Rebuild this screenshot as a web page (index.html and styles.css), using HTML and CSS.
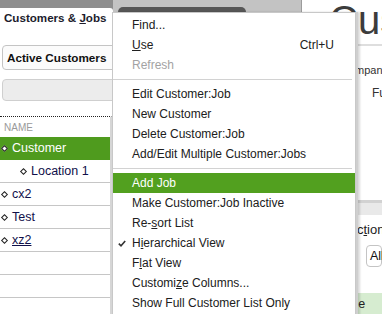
FILE: index.html
```html
<!DOCTYPE html>
<html>
<head>
<meta charset="utf-8">
<link rel="stylesheet" href="styles.css">
</head>
<body>
<div class="app">
  <section class="left">
    <div class="title">Customers &amp; <u>J</u>obs</div>
    <div class="select">Active Customers</div>
    <div class="search"></div>
    <div class="list">
      <div class="head">NAME</div>
      <div class="row sel"><span class="dia"></span>Customer</div>
      <div class="row sub"><span class="dia"></span>Location 1</div>
      <div class="row"><span class="dia"></span>cx2</div>
      <div class="row"><span class="dia"></span>Test</div>
      <div class="row"><span class="dia"></span><span class="link">xz2</span></div>
      <div class="row"></div>
      <div class="row"></div>
      <div class="row"></div>
    </div>
  </section>
  <section class="mid">
    <div class="tab"></div>
  </section>
  <section class="right">
    <div class="heading">Customer</div>
    <div class="field f1">Company Name</div>
    <div class="field f2">Full Name</div>
    <div class="bar"></div>
    <div class="trans">Transac<u>t</u>ions</div>
    <div class="all">All</div>
    <div class="green">Type</div>
  </section>

  <nav class="menu">
    <div class="item"><span>Find...</span></div>
    <div class="item"><span><u>U</u>se</span><span>Ctrl+U</span></div>
    <div class="item dis"><span>Refresh</span></div>
    <div class="sep"></div>
    <div class="item"><span>Edit Customer:Job</span></div>
    <div class="item"><span>New Customer</span></div>
    <div class="item"><span>Delete Customer:Job</span></div>
    <div class="item"><span>Add/Edit Multiple Customer:Jobs</span></div>
    <div class="sep"></div>
    <div class="item hi"><span>Add Job</span></div>
    <div class="item"><span>Make Customer:Job Inactive</span></div>
    <div class="item"><span>Re-<u>s</u>ort List</span></div>
    <div class="item"><svg class="check" width="8" height="7" viewBox="0 0 8 7"><polyline points="0.8,3.6 3,5.8 7.2,1" fill="none" stroke="#333" stroke-width="1.6"/></svg><span>H<u>i</u>erarchical View</span></div>
    <div class="item"><span>F<u>l</u>at View</span></div>
    <div class="item"><span>Customi<u>z</u>e Columns...</span></div>
    <div class="item"><span>Show Full Customer List Only</span></div>
  </nav>
</div>
</body>
</html>
```

FILE: styles.css
```css
html, body {
  margin: 0;
  padding: 0;
}
body {
  width: 382px;
  height: 314px;
  overflow: hidden;
  font-family: "Liberation Sans", Arial, sans-serif;
}
.app {
  position: relative;
  display: grid;
  grid-template-columns: 113px 188px 81px;
  height: 314px;
  background: #8e8e8e;
}
.left {
  margin-top: 8px;
  background: #fff;
  border-top-right-radius: 3px;
  display: flex;
  flex-direction: column;
  overflow: hidden;
}
.left > * {
  flex: none;
}
.title {
  height: 20px;
  line-height: 20px;
  padding-left: 4px;
  font-size: 11.6px;
  font-weight: bold;
  color: #1c1c2c;
  white-space: nowrap;
}
.select {
  margin: 17px 0 0 2px;
  width: 130px;
  height: 23px;
  line-height: 23px;
  border: 1px solid #c4c4c4;
  border-radius: 4px;
  background: #fbfbfb;
  padding-left: 4px;
  font-size: 11.7px;
  font-weight: bold;
  color: #111;
  white-space: nowrap;
}
.search {
  margin: 9px 0 0 2px;
  width: 130px;
  height: 20px;
  border: 1px solid #cfcfcf;
  border-radius: 4px;
  background: #ececec;
}
.list {
  margin-top: 15px;
  width: 110px;
  border-top: 1px dotted #222;
  border-right: 2px solid #d6d6d6;
}
.head {
  height: 20px;
  line-height: 21px;
  padding-left: 4px;
  font-size: 10px;
  color: #9a9a9a;
}
.row {
  height: 22px;
  border-bottom: 1px solid #c6c6c6;
  display: flex;
  align-items: center;
  font-size: 12.5px;
  color: #10104a;
  white-space: nowrap;
}
.row.sel {
  background: #4f9b1e;
  border-bottom-color: #4f9b1e;
  color: #fff;
}
.row.sub {
  padding-left: 19px;
}
.dia {
  width: 3px;
  height: 3px;
  border: 1px solid #222;
  background: #fff;
  transform: rotate(45deg);
  margin: 0 5px 0 2px;
  flex: none;
}
.link {
  text-decoration: underline;
}
.mid {
  background: #c3c3c3;
}
.tab {
  margin: 7px 0 0 5px;
  width: 128px;
  height: 8px;
  background: #575757;
  border-radius: 5px 5px 0 0;
}
.right {
  background: #fff;
  border-left: 1px solid #9c9c9c;
  overflow: hidden;
  white-space: nowrap;
}
.heading {
  height: 44px;
  line-height: 40px;
  font-size: 40px;
  color: #3c3c3c;
  padding-left: 27px;
  border-bottom: 2px solid #dedede;
}
.field {
  font-size: 11px;
  color: #333;
}
.f1 {
  margin-top: 18px;
  padding-left: 39px;
}
.f2 {
  margin-top: 10px;
  padding-left: 70px;
  font-size: 12px;
}
.bar {
  margin-top: 100px;
  height: 12px;
  border-top: 3px solid #d2d2d2;
  background: #e9e9e9;
}
.trans {
  margin-top: 7px;
  padding-left: 15px;
  font-size: 13px;
  color: #222;
}
.all {
  margin: 8px 0 0 64px;
  height: 20px;
  line-height: 20px;
  border: 1px solid #c4c4c4;
  border-radius: 4px;
  padding-left: 3px;
  font-size: 12.5px;
  color: #111;
}
.green {
  margin-top: 26px;
  height: 22px;
  line-height: 22px;
  background: #d6ecd0;
  padding-left: 36px;
  font-size: 12.5px;
  color: #222;
}
.menu {
  position: absolute;
  left: 112px;
  top: 12px;
  width: 242px;
  height: 320px;
  background: #fff;
  border: 1px solid #c8c8c8;
  padding-top: 2px;
  box-shadow: 2px 0 0 #cfcfcf, 4px 0 2px rgba(0,0,0,0.15);
  font-size: 12px;
  color: #202020;
}
.item {
  position: relative;
  height: 20px;
  line-height: 20px;
  padding: 0 21px 0 19px;
  display: flex;
  justify-content: space-between;
  white-space: nowrap;
}
.item.dis {
  color: #a3a3a3;
}
.item.hi {
  background: #52a01f;
  color: #fff;
}
.sep {
  height: 1px;
  margin: 4px 3px 4px 0;
  background: #d2d2d2;
}
.check {
  position: absolute;
  left: 5px;
  top: 7px;
}
```
